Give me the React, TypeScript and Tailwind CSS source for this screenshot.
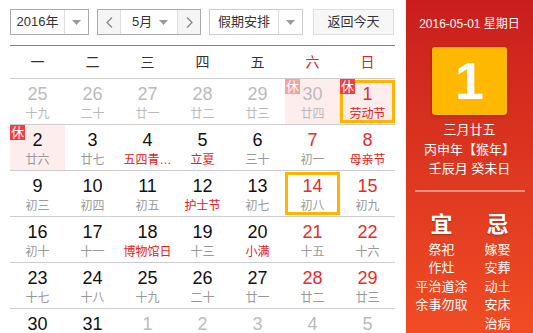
import React from "react";

type Day = {
  n: number;
  lunar: string;
  out?: boolean;
  red?: boolean;
  fest?: boolean;
  rest?: boolean;
  restFade?: boolean;
  pink?: boolean;
  sel?: boolean;
};

const WEEK = ["一", "二", "三", "四", "五", "六", "日"];

const ROWS: Day[][] = [
  [
    { n: 25, lunar: "十九", out: true },
    { n: 26, lunar: "二十", out: true },
    { n: 27, lunar: "廿一", out: true },
    { n: 28, lunar: "廿二", out: true },
    { n: 29, lunar: "廿三", out: true },
    { n: 30, lunar: "廿四", out: true, pink: true, rest: true, restFade: true },
    { n: 1, lunar: "劳动节", red: true, fest: true, pink: true, rest: true, sel: true },
  ],
  [
    { n: 2, lunar: "廿六", pink: true, rest: true },
    { n: 3, lunar: "廿七" },
    { n: 4, lunar: "五四青…", fest: true },
    { n: 5, lunar: "立夏", fest: true },
    { n: 6, lunar: "三十" },
    { n: 7, lunar: "初一", red: true },
    { n: 8, lunar: "母亲节", red: true, fest: true },
  ],
  [
    { n: 9, lunar: "初三" },
    { n: 10, lunar: "初四" },
    { n: 11, lunar: "初五" },
    { n: 12, lunar: "护士节", fest: true },
    { n: 13, lunar: "初七" },
    { n: 14, lunar: "初八", red: true, sel: true },
    { n: 15, lunar: "初九", red: true },
  ],
  [
    { n: 16, lunar: "初十" },
    { n: 17, lunar: "十一" },
    { n: 18, lunar: "博物馆日", fest: true },
    { n: 19, lunar: "十三" },
    { n: 20, lunar: "小满", fest: true },
    { n: 21, lunar: "十五", red: true },
    { n: 22, lunar: "十六", red: true },
  ],
  [
    { n: 23, lunar: "十七" },
    { n: 24, lunar: "十八" },
    { n: 25, lunar: "十九" },
    { n: 26, lunar: "二十" },
    { n: 27, lunar: "廿一" },
    { n: 28, lunar: "廿二", red: true },
    { n: 29, lunar: "廿三", red: true },
  ],
  [
    { n: 30, lunar: "廿四" },
    { n: 31, lunar: "廿五" },
    { n: 1, lunar: "廿六", out: true },
    { n: 2, lunar: "廿七", out: true },
    { n: 3, lunar: "廿八", out: true },
    { n: 4, lunar: "廿九", out: true },
    { n: 5, lunar: "初一", out: true },
  ],
];

const YI = ["祭祀", "作灶", "平治道涂", "余事勿取"];
const JI = ["嫁娶", "安葬", "动土", "安床", "治病"];

function Caret() {
  return (
    <svg width="9" height="5" viewBox="0 0 9 5">
      <path d="M0 0h9L4.5 5z" fill="#999" />
    </svg>
  );
}

function Chevron({ dir }: { dir: "l" | "r" }) {
  return (
    <svg width="7" height="11" viewBox="0 0 7 11">
      <path
        d={dir === "l" ? "M6 0.5L1 5.5l5 5" : "M1 0.5l5 5-5 5"}
        stroke="#888"
        strokeWidth="1.3"
        fill="none"
      />
    </svg>
  );
}

function Cell({ d }: { d: Day }) {
  const numColor = d.out ? "text-[#bbbbbb]" : d.red ? "text-[#e52d2d]" : "text-[#111111]";
  const lunarColor = d.out ? "text-[#bbbbbb]" : d.fest ? "text-[#e52020]" : "text-[#999999]";
  return (
    <div className={`relative h-[45px] flex flex-col items-center pt-[5px] ${d.pink ? "bg-[#fdeded]" : ""}`}>
      <div className={`text-[18px] leading-[20px] ${numColor}`}>{d.n}</div>
      <div className={`mt-[2px] text-[12px] leading-[16px] whitespace-nowrap ${lunarColor}`}>{d.lunar}</div>
      {d.sel && <div className="absolute inset-x-0 top-[1px] bottom-[1px] border-[3px] border-[#ffb400]" />}
      {d.rest && (
        <div
          className={`absolute left-0 top-0 w-[15px] h-[15px] flex items-center justify-center text-[13px] leading-none text-white ${
            d.restFade ? "bg-[#f9a0a0]" : "bg-[#f53d3d]"
          }`}
        >
          休
        </div>
      )}
    </div>
  );
}

export default function App() {
  return (
    <div
      className="w-[533px] h-[333px] overflow-hidden flex bg-white"
      style={{ fontFamily: '"Liberation Sans", "Noto Sans CJK SC", sans-serif' }}
    >
      {/* Calendar */}
      <div className="w-[406px] shrink-0 pl-[10px] pr-[11px]">
        <div className="mt-[9px] h-[26px] flex text-[13px] text-[#333]">
          <div className="w-[79px] flex border border-[#aaaaaa]">
            <div className="flex-1 flex items-center justify-center">2016年</div>
            <div className="w-[24px] border-l border-[#dddddd] flex items-center justify-center">
              <Caret />
            </div>
          </div>
          <div className="ml-[8px] w-[104px] flex border border-[#aaaaaa]">
            <div className="w-[22px] bg-[#f5f5f5] flex items-center justify-center">
              <Chevron dir="l" />
            </div>
            <div className="flex-1 flex items-center border-x border-[#dddddd] pl-[11px] pr-[9px]">
              <span className="flex-1">5月</span>
              <Caret />
            </div>
            <div className="w-[22px] bg-[#f5f5f5] flex items-center justify-center">
              <Chevron dir="r" />
            </div>
          </div>
          <div className="ml-[8px] w-[94px] flex border border-[#cccccc]">
            <div className="flex-1 flex items-center justify-center">假期安排</div>
            <div className="w-[24px] border-l border-[#dddddd] flex items-center justify-center">
              <Caret />
            </div>
          </div>
          <div className="ml-[10px] w-[81px] flex items-center justify-center bg-[#f7f7f7] border border-[#dddddd]">
            返回今天
          </div>
        </div>

        <div className="mt-[10px] border-t border-[#e8574c] h-[34px] grid grid-cols-7 items-center border-b border-b-[#cccccc]">
          {WEEK.map((w, i) => (
            <div key={w} className={`text-center text-[14px] ${i >= 5 ? "text-[#e52020]" : "text-[#333]"}`}>
              {w}
            </div>
          ))}
        </div>

        {ROWS.map((row, ri) => (
          <div key={ri} className="grid grid-cols-7 border-b border-[#cccccc]">
            {row.map((d, ci) => (
              <Cell key={ci} d={d} />
            ))}
          </div>
        ))}
      </div>

      {/* Side panel */}
      <div className="flex-1 h-full bg-gradient-to-b from-[#c91d1d] to-[#f04c24] text-white flex flex-col items-center">
        <div className="mt-[17px] text-[12px] leading-[14px] whitespace-nowrap">2016-05-01 星期日</div>
        <div className="mt-[16px] w-[75px] h-[75px] rounded-[3px] bg-[#ffb800] shadow-[0_1px_3px_rgba(0,0,0,0.3)] flex items-center justify-center text-[52px] font-bold leading-none">
          1
        </div>
        <div className="mt-[5px] text-[13px] leading-[19.5px] text-center">
          <div>三月廿五</div>
          <div className="whitespace-nowrap">丙申年【猴年】</div>
          <div>壬辰月 癸未日</div>
        </div>
        <div className="mt-[11px] w-[110px] h-[2px] bg-[#f28c7c]" />
        <div className="mt-[20px] grid grid-cols-[56px_56px] text-center">
          <div className="text-[22px] leading-[26px] font-bold [text-shadow:0_1px_2px_rgba(0,0,0,0.3)]">宜</div>
          <div className="text-[22px] leading-[26px] font-bold [text-shadow:0_1px_2px_rgba(0,0,0,0.3)]">忌</div>
          <div className="mt-[3px] text-[13px] leading-[18.5px]">
            {YI.map((t) => (
              <div key={t} className="whitespace-nowrap">{t}</div>
            ))}
          </div>
          <div className="mt-[3px] text-[13px] leading-[18.5px]">
            {JI.map((t) => (
              <div key={t}>{t}</div>
            ))}
          </div>
        </div>
      </div>
    </div>
  );
}
